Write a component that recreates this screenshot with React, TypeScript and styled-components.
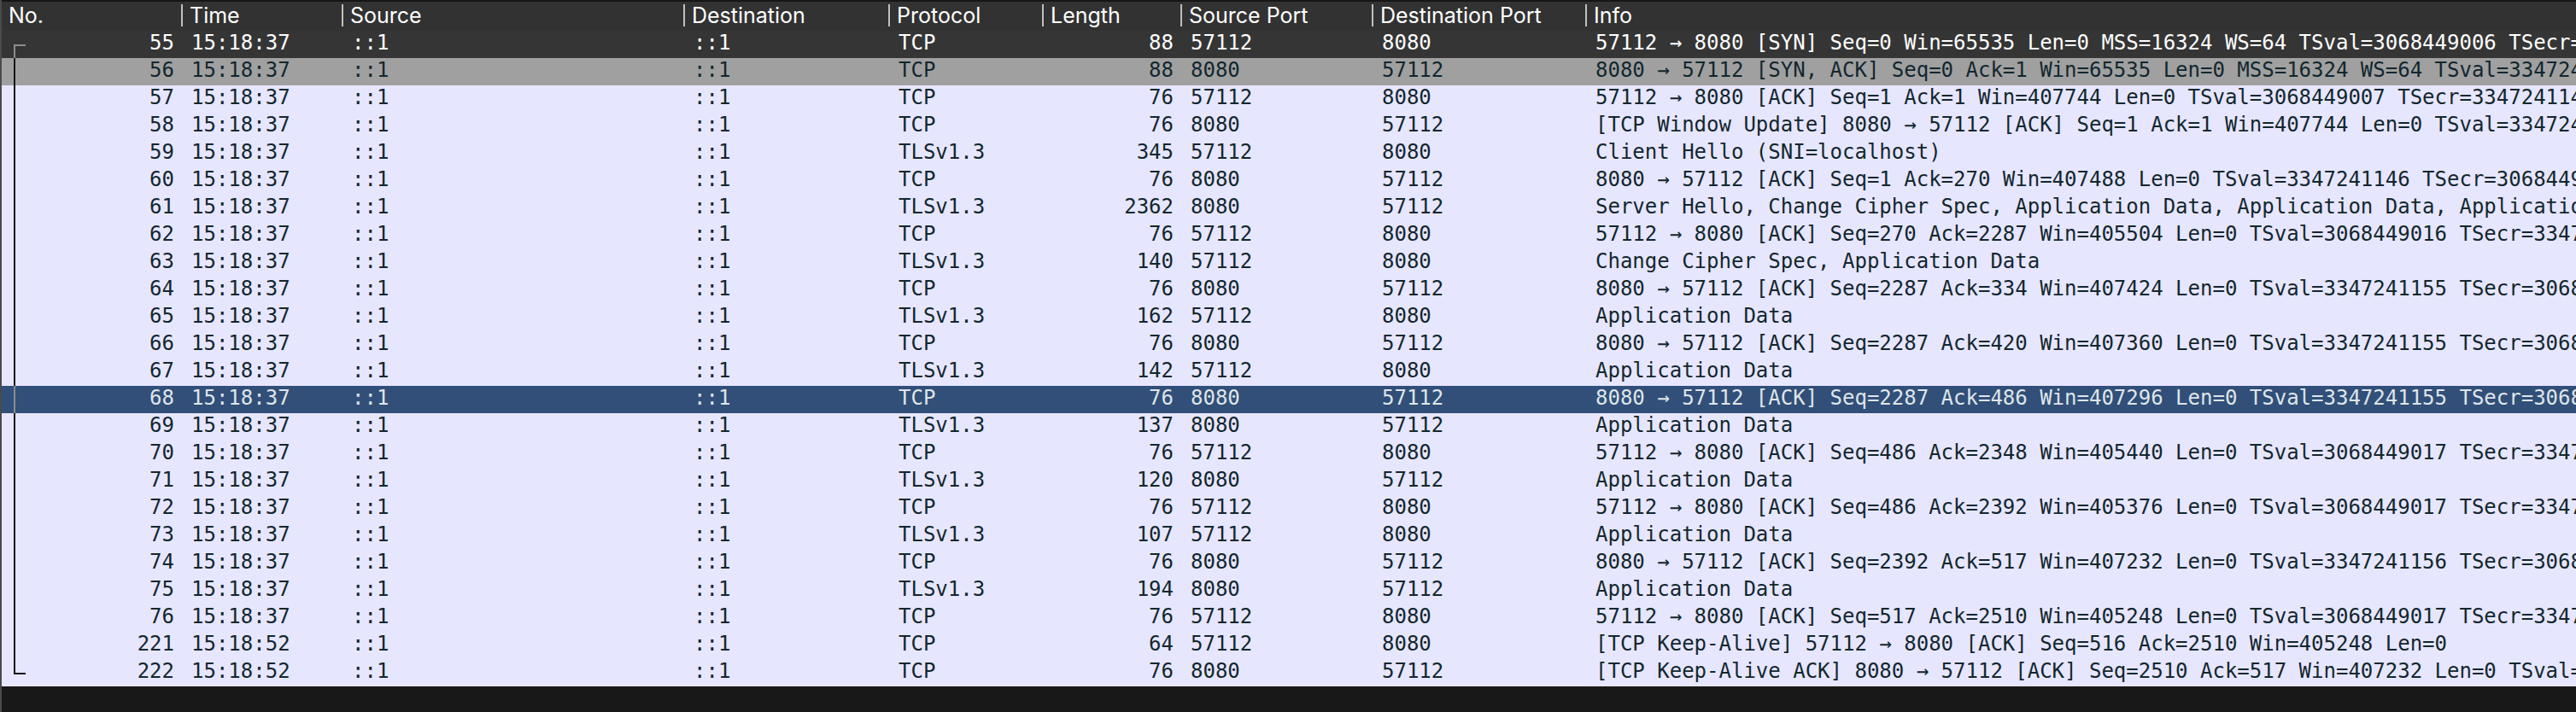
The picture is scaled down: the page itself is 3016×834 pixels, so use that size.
import React from 'react';
import styled, { createGlobalStyle } from 'styled-components';

const GlobalStyle = createGlobalStyle`
  body {
    margin: 0;
    background: #181818;
  }
`;

type Tone = 'syn' | 'synAck' | 'stream' | 'selected';

const tones: Record<Tone, { bg: string; fg: string; line: string }> = {
  syn: { bg: '#353535', fg: '#ffffff', line: '#8c8c8c' },
  synAck: { bg: '#a0a0a0', fg: '#12272e', line: '#12181c' },
  stream: { bg: '#e7e6ff', fg: '#12272e', line: '#12181c' },
  selected: { bg: '#314f78', fg: '#dfe5ea', line: '#8c8c8c' },
};

const Pane = styled.main`
  box-sizing: border-box;
  min-height: 100vh;
  border-left: 2px solid #4a4a4a;
  background: #181818;
  overflow: hidden;
`;

const PacketTable = styled.table`
  width: 100%;
  table-layout: fixed;
  border-collapse: separate;
  border-spacing: 0;
  font: 24px/28px 'DejaVu Sans Mono', 'Liberation Mono', monospace;
`;

const Column = styled.col<{ $width?: number }>`
  width: ${({ $width }) => ($width ? `${$width}px` : 'auto')};
`;

const HeaderRow = styled.tr`
  background: #323232;
  color: #ffffff;
`;

const HeaderCell = styled.th`
  padding: 0;
  text-align: left;
  font: 400 25px/26px Inter, Roboto, sans-serif;
  white-space: nowrap;
  border-top: 2px solid #161616;
`;

const HeaderLabel = styled.div`
  margin: 3px 0 5px;
  padding-left: 8px;
  border-right: 2px solid #c0c0c0;

  ${HeaderCell}:last-child & {
    border-right: 0;
  }
`;

const PacketRow = styled.tr<{ $tone: Tone }>`
  height: 32px;
  background: ${({ $tone }) => tones[$tone].bg};
  color: ${({ $tone }) => tones[$tone].fg};
`;

const Cell = styled.td<{ $align?: 'right' }>`
  padding: 0 10px;
  text-align: ${({ $align }) => $align ?? 'left'};
  vertical-align: top;
  white-space: nowrap;
  overflow: hidden;
`;

const NumberCell = styled.td`
  padding: 0;
`;

const NumberContent = styled.div`
  display: flex;
  justify-content: space-between;
  height: 32px;
  padding: 0 10px 0 14px;
`;

type Mark = 'first' | 'middle' | 'last';

const markHeights: Record<Mark, number> = { first: 16, middle: 32, last: 18 };

const StreamMark = styled.span<{ $mark: Mark; $tone: Tone }>`
  box-sizing: border-box;
  width: 14px;
  height: ${({ $mark }) => markHeights[$mark]}px;
  align-self: ${({ $mark }) => ($mark === 'first' ? 'flex-end' : 'flex-start')};
  border: 0 solid ${({ $tone }) => tones[$tone].line};
  border-left-width: 2px;
  border-top-width: ${({ $mark }) => ($mark === 'first' ? '2px' : '0')};
  border-bottom-width: ${({ $mark }) => ($mark === 'last' ? '2px' : '0')};
`;

const columns: { label: string; width?: number }[] = [
  { label: 'No.', width: 212 },
  { label: 'Time', width: 188 },
  { label: 'Source', width: 400 },
  { label: 'Destination', width: 240 },
  { label: 'Protocol', width: 180 },
  { label: 'Length', width: 162 },
  { label: 'Source Port', width: 224 },
  { label: 'Destination Port', width: 250 },
  { label: 'Info' },
];

interface Packet {
  no: number;
  protocol: string;
  length: number;
  from: number;
  info: string;
  time?: string;
  tone?: Tone;
}

const CLIENT = 57112;
const SERVER = 8080;

const packets: Packet[] = [
  { no: 55, protocol: 'TCP', length: 88, from: CLIENT, tone: 'syn', info: '57112 → 8080 [SYN] Seq=0 Win=65535 Len=0 MSS=16324 WS=64 TSval=3068449006 TSecr=0 SACK_PERM' },
  { no: 56, protocol: 'TCP', length: 88, from: SERVER, tone: 'synAck', info: '8080 → 57112 [SYN, ACK] Seq=0 Ack=1 Win=65535 Len=0 MSS=16324 WS=64 TSval=3347241146 TSecr=3068449006' },
  { no: 57, protocol: 'TCP', length: 76, from: CLIENT, info: '57112 → 8080 [ACK] Seq=1 Ack=1 Win=407744 Len=0 TSval=3068449007 TSecr=3347241146' },
  { no: 58, protocol: 'TCP', length: 76, from: SERVER, info: '[TCP Window Update] 8080 → 57112 [ACK] Seq=1 Ack=1 Win=407744 Len=0 TSval=3347241146 TSecr=3068449007' },
  { no: 59, protocol: 'TLSv1.3', length: 345, from: CLIENT, info: 'Client Hello (SNI=localhost)' },
  { no: 60, protocol: 'TCP', length: 76, from: SERVER, info: '8080 → 57112 [ACK] Seq=1 Ack=270 Win=407488 Len=0 TSval=3347241146 TSecr=3068449007' },
  { no: 61, protocol: 'TLSv1.3', length: 2362, from: SERVER, info: 'Server Hello, Change Cipher Spec, Application Data, Application Data, Application Data, Application Data' },
  { no: 62, protocol: 'TCP', length: 76, from: CLIENT, info: '57112 → 8080 [ACK] Seq=270 Ack=2287 Win=405504 Len=0 TSval=3068449016 TSecr=3347241155' },
  { no: 63, protocol: 'TLSv1.3', length: 140, from: CLIENT, info: 'Change Cipher Spec, Application Data' },
  { no: 64, protocol: 'TCP', length: 76, from: SERVER, info: '8080 → 57112 [ACK] Seq=2287 Ack=334 Win=407424 Len=0 TSval=3347241155 TSecr=3068449016' },
  { no: 65, protocol: 'TLSv1.3', length: 162, from: CLIENT, info: 'Application Data' },
  { no: 66, protocol: 'TCP', length: 76, from: SERVER, info: '8080 → 57112 [ACK] Seq=2287 Ack=420 Win=407360 Len=0 TSval=3347241155 TSecr=3068449016' },
  { no: 67, protocol: 'TLSv1.3', length: 142, from: CLIENT, info: 'Application Data' },
  { no: 68, protocol: 'TCP', length: 76, from: SERVER, tone: 'selected', info: '8080 → 57112 [ACK] Seq=2287 Ack=486 Win=407296 Len=0 TSval=3347241155 TSecr=3068449016' },
  { no: 69, protocol: 'TLSv1.3', length: 137, from: SERVER, info: 'Application Data' },
  { no: 70, protocol: 'TCP', length: 76, from: CLIENT, info: '57112 → 8080 [ACK] Seq=486 Ack=2348 Win=405440 Len=0 TSval=3068449017 TSecr=3347241155' },
  { no: 71, protocol: 'TLSv1.3', length: 120, from: SERVER, info: 'Application Data' },
  { no: 72, protocol: 'TCP', length: 76, from: CLIENT, info: '57112 → 8080 [ACK] Seq=486 Ack=2392 Win=405376 Len=0 TSval=3068449017 TSecr=3347241155' },
  { no: 73, protocol: 'TLSv1.3', length: 107, from: CLIENT, info: 'Application Data' },
  { no: 74, protocol: 'TCP', length: 76, from: SERVER, info: '8080 → 57112 [ACK] Seq=2392 Ack=517 Win=407232 Len=0 TSval=3347241156 TSecr=3068449017' },
  { no: 75, protocol: 'TLSv1.3', length: 194, from: SERVER, info: 'Application Data' },
  { no: 76, protocol: 'TCP', length: 76, from: CLIENT, info: '57112 → 8080 [ACK] Seq=517 Ack=2510 Win=405248 Len=0 TSval=3068449017 TSecr=3347241156' },
  { no: 221, protocol: 'TCP', length: 64, from: CLIENT, time: '15:18:52', info: '[TCP Keep-Alive] 57112 → 8080 [ACK] Seq=516 Ack=2510 Win=405248 Len=0' },
  { no: 222, protocol: 'TCP', length: 76, from: SERVER, time: '15:18:52', info: '[TCP Keep-Alive ACK] 8080 → 57112 [ACK] Seq=2510 Ack=517 Win=407232 Len=0 TSval=3347256200 TSecr=3068449017' },
];

const markFor = (index: number): Mark =>
  index === 0 ? 'first' : index === packets.length - 1 ? 'last' : 'middle';

function PacketLine({ packet, mark }: { packet: Packet; mark: Mark }) {
  const tone = packet.tone ?? 'stream';
  return (
    <PacketRow $tone={tone} aria-selected={tone === 'selected'}>
      <NumberCell>
        <NumberContent>
          <StreamMark $mark={mark} $tone={tone} />
          {packet.no}
        </NumberContent>
      </NumberCell>
      <Cell>{packet.time ?? '15:18:37'}</Cell>
      <Cell>::1</Cell>
      <Cell>::1</Cell>
      <Cell>{packet.protocol}</Cell>
      <Cell $align="right">{packet.length}</Cell>
      <Cell>{packet.from}</Cell>
      <Cell>{packet.from === CLIENT ? SERVER : CLIENT}</Cell>
      <Cell>{packet.info}</Cell>
    </PacketRow>
  );
}

export default function App() {
  return (
    <Pane>
      <GlobalStyle />
      <PacketTable>
        <colgroup>
          {columns.map(({ label, width }) => (
            <Column key={label} $width={width} />
          ))}
        </colgroup>
        <thead>
          <HeaderRow>
            {columns.map(({ label }) => (
              <HeaderCell key={label} scope="col">
                <HeaderLabel>{label}</HeaderLabel>
              </HeaderCell>
            ))}
          </HeaderRow>
        </thead>
        <tbody>
          {packets.map((packet, index) => (
            <PacketLine key={packet.no} packet={packet} mark={markFor(index)} />
          ))}
        </tbody>
      </PacketTable>
    </Pane>
  );
}
